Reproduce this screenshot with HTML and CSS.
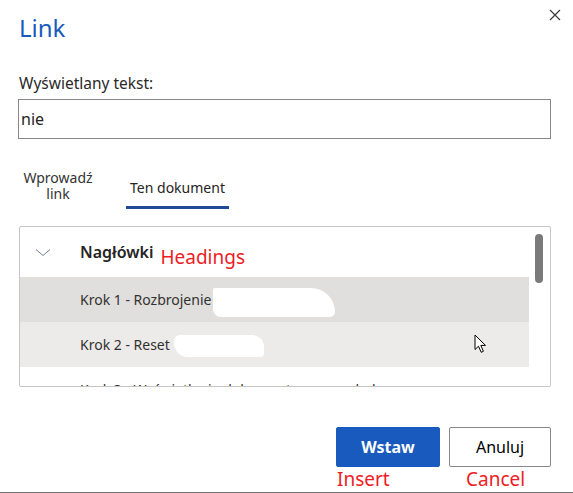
FILE: index.html
```html
<!DOCTYPE html>
<html lang="pl">
<head>
<meta charset="utf-8">
<title>Link</title>
<link rel="stylesheet" href="styles.css">
</head>
<body>
<div class="page">
  <div class="dialog">
    <div class="header">
      <h1 class="title">Link</h1>
      <button class="close" aria-label="Zamknij">
        <svg width="12" height="12" viewBox="0 0 12 12"><path d="M1 1L11 11M11 1L1 11" stroke="#3b3a39" stroke-width="1.2" fill="none"/></svg>
      </button>
    </div>

    <label class="label" for="txt">Wyświetlany tekst:</label>
    <input id="txt" class="textbox" type="text" value="nie">

    <div class="tabs">
      <div class="tab tab-plain"><span class="tab-line">Wprowadź</span><span class="tab-line">link</span></div>
      <div class="tab tab-active">Ten dokument</div>
    </div>

    <div class="listbox">
      <div class="list">
        <div class="group-head">
          <svg class="chev" width="16" height="9" viewBox="0 0 16 9"><path d="M1 1.5L8 7.5L15 1.5" stroke="#6f7f9a" stroke-width="1" fill="none"/></svg>
          <span class="group-title">Nagłówki</span>
          <span class="note note-head">Headings</span>
        </div>
        <div class="row row-selected">
          <span>Krok 1 - Rozbrojenie</span><span class="redact redact-1"></span>
        </div>
        <div class="row row-hover">
          <span>Krok 2 - Reset</span><span class="redact redact-2"></span>
          <svg class="cursor" width="14" height="20" viewBox="0 0 14 20"><path d="M1 1L1 15.5L4.5 12.2L7.2 18.3L9.4 17.3L6.8 11.4L11.5 11.4Z" fill="#fff" stroke="#000" stroke-width="1" stroke-linejoin="miter"/></svg>
        </div>
        <div class="row">
          <span>Krok 3 - Wyświetlanie dokumentu w przeglądarce</span>
        </div>
      </div>
      <div class="track"><div class="thumb"></div></div>
    </div>

    <div class="footer">
      <div class="action">
        <button class="btn btn-primary">Wstaw</button>
        <span class="note note-insert">Insert</span>
      </div>
      <div class="action">
        <button class="btn btn-default">Anuluj</button>
        <span class="note note-cancel">Cancel</span>
      </div>
    </div>
  </div>
</div>
</body>
</html>
```

FILE: styles.css
```css
* { box-sizing: border-box; }

html, body {
  margin: 0;
  padding: 0;
  background: #ffffff;
}

body {
  font-family: "Noto Sans", "Open Sans", "DejaVu Sans", sans-serif;
  color: #323130;
}

.page {
  width: 573px;
  height: 493px;
  border-bottom: 1px solid #707070;
  overflow: hidden;
}

.dialog {
  padding: 0 22px 0 18px;
}

.header {
  display: flex;
  justify-content: space-between;
  align-items: flex-start;
  height: 73px;
}

.title {
  margin: 12px 0 0 1px;
  font-size: 24px;
  line-height: 32px;
  font-weight: 400;
  color: #185abd;
}

.close {
  margin: 9px -10px 0 0;
  padding: 0;
  width: 12px;
  height: 12px;
  border: 0;
  background: transparent;
  display: flex;
}

.label {
  display: block;
  font-size: 15.5px;
  line-height: 20px;
  color: #2b2a29;
  margin-left: 1px;
  height: 26px;
}

.textbox {
  display: block;
  width: 100%;
  height: 40px;
  margin: 0;
  padding: 0 2px;
  border: 1px solid #8a8886;
  border-radius: 0;
  font-family: inherit;
  font-size: 16px;
  color: #252423;
  outline: none;
}

.tabs {
  display: flex;
  align-items: flex-start;
  margin-top: 31px;
  height: 39px;
}

.tab {
  font-size: 14px;
  text-align: center;
}

.tab-plain {
  width: 80px;
  margin-top: 0;
  display: flex;
  flex-direction: column;
  align-items: center;
  color: #333333;
}

.tab-line {
  display: block;
  line-height: 16px;
  height: 16px;
}

.tab-active {
  margin-left: 28px;
  width: 103px;
  line-height: 16px;
  padding: 10px 0 10px;
  border-bottom: 3px solid #1f4a96;
  color: #252423;
}

.listbox {
  display: flex;
  margin: 17px 0 0 1px;
  height: 161px;
  border: 1px solid #c8c6c4;
  border-radius: 2px;
  overflow: hidden;
}

.list {
  width: 509px;
  flex: none;
}

.group-head {
  display: flex;
  align-items: center;
  height: 50px;
  padding-left: 15px;
}

.chev {
  flex: none;
  margin-right: 29px;
  margin-top: 0;
}

.group-title {
  font-size: 16px;
  font-weight: 600;
  color: #252423;
  margin-right: 7px;
}

.note {
  font-size: 19px;
  color: #ee1c25;
  font-family: "Noto Sans", "Open Sans", sans-serif;
}

.note-head {
  position: relative;
  top: 5px;
}

.row {
  position: relative;
  display: flex;
  align-items: center;
  height: 45px;
  padding-left: 60px;
  font-size: 14px;
  color: #323130;
  white-space: nowrap;
}

.row-selected { background: #e1dfdd; }
.row-hover { background: #edebe9; }

.redact {
  display: inline-block;
  background: #ffffff;
}

.redact-1 {
  width: 122px;
  height: 29px;
  margin-left: 2px;
  margin-top: 6px;
  border-radius: 2px 30px 6px 10px;
}

.redact-2 {
  width: 90px;
  height: 22px;
  margin-left: 4px;
  margin-top: 3px;
  border-radius: 6px 12px 4px 14px;
}

.cursor {
  position: absolute;
  left: 454px;
  top: 12px;
}

.track {
  flex: 1;
  padding: 7px 0 0 6px;
}

.thumb {
  width: 8px;
  height: 49px;
  border-radius: 4px;
  background: #7a7a7a;
}

.footer {
  display: flex;
  justify-content: flex-end;
  gap: 9px;
  margin-top: 40px;
}

.action {
  display: flex;
  flex-direction: column;
}

.btn {
  height: 40px;
  border-radius: 2px;
  font-family: inherit;
  font-size: 16px;
  padding: 0;
  cursor: pointer;
}

.btn-primary {
  width: 104px;
  background: #185abd;
  border: 1px solid #185abd;
  color: #ffffff;
  font-weight: 700;
}

.btn-default {
  width: 102px;
  background: #ffffff;
  border: 1px solid #8a8886;
  color: #000000;
}

.note-insert {
  margin-left: 1px;
  line-height: 24px;
}

.note-cancel {
  margin-left: 17px;
  line-height: 24px;
}
```
